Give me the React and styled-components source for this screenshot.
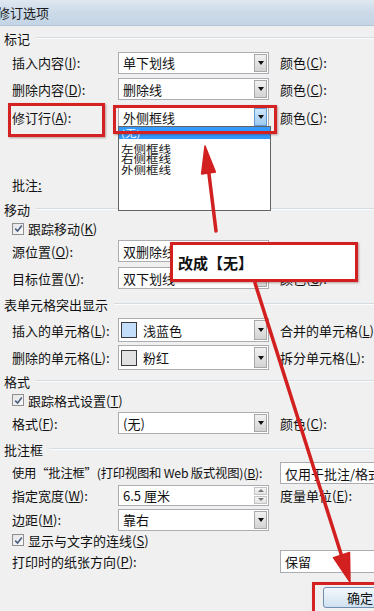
import styled, { createGlobalStyle } from 'styled-components';

const GlobalStyle = createGlobalStyle`
  html, body {
    margin: 0;
    padding: 0;
    background: #f0f0f0;
    overflow: hidden;
  }
  body {
    font-family: "Noto Sans CJK SC", "Liberation Sans", sans-serif;
    font-size: 13px;
    color: #111;
  }
`;

const Dialog = styled.div`
  position: relative;
  width: 374px;
  height: 611px;
  overflow: hidden;
  background: #f0f0f0;
`;

const TitleBar = styled.div`
  height: 26px;
  display: flex;
  align-items: center;
  background: linear-gradient(180deg, #dfe8f1 0%, #cddbe9 45%, #c3d4e5 100%);
  border-bottom: 1px solid #b4c4d4;
  box-sizing: border-box;
`;

const Title = styled.span`
  margin-left: -3px;
  font-size: 13px;
  color: #1a1a1a;
`;

const Body = styled.div`
  padding-left: 4px;
`;

const GroupHeader = styled.div`
  display: flex;
  align-items: center;
  gap: 6px;
  height: ${(p) => p.$h}px;
  font-size: 13px;
  white-space: nowrap;

  &::after {
    content: '';
    flex: 1;
    border-top: 1px solid #d5dde3;
    border-bottom: 1px solid #fbfbfb;
  }
`;

const Row = styled.div`
  display: flex;
  align-items: center;
  height: ${(p) => p.$h}px;
  margin-top: ${(p) => p.$gap || 0}px;
  padding-left: 8px;
  white-space: nowrap;
`;

const Label = styled.div`
  width: ${(p) => p.$w || 106}px;
  flex-shrink: 0;
  font-size: ${(p) => (p.$tight ? 12.3 : 13)}px;
  letter-spacing: ${(p) => (p.$tight ? -0.2 : 0)}px;
  overflow: hidden;
`;

const Combo = styled.div`
  width: ${(p) => p.$w || 151}px;
  height: ${(p) => p.$h || 22}px;
  flex-shrink: 0;
  box-sizing: border-box;
  background: #fff;
  border: 1px solid #abadb3;
  display: flex;
  align-items: center;
`;

const ComboText = styled.div`
  flex: 1;
  padding-left: ${(p) => (p.$afterSwatch ? 6 : 4)}px;
  font-size: 13px;
  overflow: hidden;
`;

const DropBtn = styled.div`
  width: 13px;
  align-self: stretch;
  margin: 1px;
  box-sizing: border-box;
  border: 1px solid ${(p) => (p.$active ? '#5f9ad3' : '#a8a8a8')};
  background: ${(p) =>
    p.$active
      ? 'linear-gradient(180deg, #cfe6fb 0%, #9ccaf2 100%)'
      : 'linear-gradient(180deg, #f1f1f1 0%, #d3d3d3 100%)'};
  display: flex;
  align-items: center;
  justify-content: center;

  &::before {
    content: '';
    border-left: 3.5px solid transparent;
    border-right: 3.5px solid transparent;
    border-top: 4px solid #111;
  }
`;

const Spinner = styled.div`
  width: 13px;
  align-self: stretch;
  margin: 1px;
  display: flex;
  flex-direction: column;
  gap: 1px;
`;

const SpinHalf = styled.div`
  flex: 1;
  border: 1px solid #c4c4c4;
  background: linear-gradient(180deg, #f6f6f6, #e2e2e2);
  display: flex;
  align-items: center;
  justify-content: center;

  &::before {
    content: '';
    border-left: 3px solid transparent;
    border-right: 3px solid transparent;
    ${(p) => (p.$up ? 'border-bottom: 3px solid #777;' : 'border-top: 3px solid #777;')}
  }
`;

const SideLabel = styled.div`
  margin-left: 11px;
  font-size: 13px;
`;

const Swatch = styled.div`
  width: 16px;
  height: 16px;
  margin-left: 2px;
  box-sizing: border-box;
  border: 1px solid #3a3a3a;
  background: ${(p) => p.$color};
  flex-shrink: 0;
`;

const CheckBox = styled.div`
  width: 12px;
  height: 12px;
  box-sizing: border-box;
  border: 1px solid #8f8f8f;
  background: linear-gradient(135deg, #e4e4e4, #fafafa);
  margin-right: 4px;
  display: flex;
  align-items: center;
  justify-content: center;
`;

const ButtonRow = styled.div`
  height: 36px;
  padding-top: 12px;
  padding-left: 319px;
  box-sizing: border-box;
`;

const OkButton = styled.div`
  width: 80px;
  height: 21px;
  box-sizing: border-box;
  border: 1px solid #6f8fb0;
  border-radius: 3px;
  background: linear-gradient(180deg, #f3f8fc 0%, #e2edf7 50%, #cfe0f0 100%);
  display: flex;
  align-items: center;
  justify-content: center;
  font-size: 13px;
  padding-right: 6px;
`;

const DropList = styled.div`
  position: absolute;
  left: 118px;
  top: 126px;
  width: 153px;
  height: 85px;
  box-sizing: border-box;
  background: #fff;
  border: 1px solid #646464;
`;

const ListItem = styled.div`
  height: ${(p) => (p.$first ? 12 : 10.5)}px;
  padding-left: 2px;
  margin-bottom: ${(p) => (p.$first ? 4 : 0)}px;
  background: ${(p) => (p.$selected ? '#3399ff' : 'transparent')};
  color: ${(p) => (p.$selected ? '#fff' : '#111')};
  display: flex;
  align-items: center;
`;

/* the list text in the picture is squeezed vertically */
const ListText = styled.span`
  display: inline-block;
  font-size: ${(p) => (p.$small ? 11.5 : 12.5)}px;
  line-height: 11px;
  transform: scaleY(0.8);
  transform-origin: center;
`;

const RedBox = styled.div`
  position: absolute;
  box-sizing: border-box;
  border: 3px solid #d42222;
  box-shadow: 1px 1px 2px rgba(90, 0, 0, 0.35);
`;

const Callout = styled.div`
  position: absolute;
  left: 170px;
  top: 242px;
  width: 188px;
  height: 40px;
  box-sizing: border-box;
  border: 3px solid #d21f1f;
  background: #fff;
  display: flex;
  align-items: center;
  padding-left: 5px;
  font-size: 15px;
  font-weight: 700;
  color: #111;
  box-shadow: 1px 1px 2px rgba(90, 0, 0, 0.35);
`;

const ArrowLayer = styled.svg`
  position: absolute;
  left: 0;
  top: 0;
  width: 374px;
  height: 611px;
  pointer-events: none;
`;

function Key({ k }) {
  return (
    <>
      (<u>{k}</u>)
    </>
  );
}

function Check() {
  return (
    <CheckBox>
      <svg width="9" height="9" viewBox="0 0 9 9">
        <path d="M1.2 4.6 L3.6 7 L7.8 1.6" fill="none" stroke="#4a5f80" strokeWidth="1.6" />
      </svg>
    </CheckBox>
  );
}

export default function App() {
  return (
    <Dialog>
      <GlobalStyle />
      <TitleBar>
        <Title>修订选项</Title>
      </TitleBar>
      <Body>
        <GroupHeader $h={24}>标记</GroupHeader>
        <Row $h={25}>
          <Label>插入内容<Key k="I" />:</Label>
          <Combo><ComboText>单下划线</ComboText><DropBtn /></Combo>
          <SideLabel>颜色<Key k="C" />:</SideLabel>
        </Row>
        <Row $h={28}>
          <Label>删除内容<Key k="D" />:</Label>
          <Combo><ComboText>删除线</ComboText><DropBtn /></Combo>
          <SideLabel>颜色<Key k="C" />:</SideLabel>
        </Row>
        <Row $h={28}>
          <Label>修订行<Key k="A" />:</Label>
          <Combo><ComboText>外侧框线</ComboText><DropBtn $active /></Combo>
          <SideLabel>颜色<Key k="C" />:</SideLabel>
        </Row>
        <Row $h={28} $gap={39}>
          <Label>批注<u>:</u></Label>
        </Row>

        <GroupHeader $h={22}>移动</GroupHeader>
        <Row $h={17}>
          <Check />跟踪移动<Key k="K" />
        </Row>
        <Row $h={28}>
          <Label>源位置<Key k="O" />:</Label>
          <Combo><ComboText>双删除线</ComboText><DropBtn /></Combo>
          <SideLabel>颜色<Key k="C" />:</SideLabel>
        </Row>
        <Row $h={26}>
          <Label>目标位置<Key k="V" />:</Label>
          <Combo><ComboText>双下划线</ComboText><DropBtn /></Combo>
          <SideLabel>颜色<Key k="C" />:</SideLabel>
        </Row>

        <GroupHeader $h={26}>表单元格突出显示</GroupHeader>
        <Row $h={26}>
          <Label>插入的单元格<Key k="L" />:</Label>
          <Combo $h={24}>
            <Swatch $color="#c2defa" />
            <ComboText $afterSwatch>浅蓝色</ComboText>
            <DropBtn />
          </Combo>
          <SideLabel>合并的单元格<Key k="L" />:</SideLabel>
        </Row>
        <Row $h={29}>
          <Label>删除的单元格<Key k="L" />:</Label>
          <Combo $h={25}>
            <Swatch $color="#e2e2e2" />
            <ComboText $afterSwatch>粉红</ComboText>
            <DropBtn />
          </Combo>
          <SideLabel>拆分单元格<Key k="L" />:</SideLabel>
        </Row>

        <GroupHeader $h={18}>格式</GroupHeader>
        <Row $h={20}>
          <Check />跟踪格式设置<Key k="T" />
        </Row>
        <Row $h={26}>
          <Label>格式<Key k="F" />:</Label>
          <Combo><ComboText>(无)</ComboText><DropBtn /></Combo>
          <SideLabel>颜色<Key k="C" />:</SideLabel>
        </Row>

        <GroupHeader $h={26}>批注框</GroupHeader>
        <Row $h={22}>
          <Label $w={268} $tight>使用“批注框”(打印视图和 Web 版式视图)<Key k="B" />:</Label>
          <Combo $w={120}><ComboText>仅用于批注/格式</ComboText></Combo>
        </Row>
        <Row $h={22}>
          <Label>指定宽度<Key k="W" />:</Label>
          <Combo $h={21}>
            <ComboText>6.5 厘米</ComboText>
            <Spinner><SpinHalf $up /><SpinHalf /></Spinner>
          </Combo>
          <SideLabel>度量单位<Key k="E" />:</SideLabel>
        </Row>
        <Row $h={27}>
          <Label>边距<Key k="M" />:</Label>
          <Combo><ComboText>靠右</ComboText><DropBtn /></Combo>
        </Row>
        <Row $h={14}>
          <Check />显示与文字的连线<Key k="S" />
        </Row>
        <Row $h={28}>
          <Label $w={268}>打印时的纸张方向<Key k="P" />:</Label>
          <Combo $w={120} $h={23}><ComboText>保留</ComboText></Combo>
        </Row>
        <ButtonRow>
          <OkButton>确定</OkButton>
        </ButtonRow>
      </Body>

      <DropList>
        <ListItem $first $selected><ListText $small>(无)</ListText></ListItem>
        <ListItem><ListText>左侧框线</ListText></ListItem>
        <ListItem><ListText>右侧框线</ListText></ListItem>
        <ListItem><ListText>外侧框线</ListText></ListItem>
      </DropList>

      <RedBox style={{ left: 8, top: 103, width: 97, height: 34 }} />
      <RedBox style={{ left: 113, top: 105, width: 164, height: 29 }} />
      <RedBox style={{ left: 312, top: 582, width: 70, height: 40 }} />

      <Callout>改成【无】</Callout>

      <ArrowLayer viewBox="0 0 374 611">
        <g fill="#d21f1f" stroke="#d21f1f" strokeLinecap="round" strokeLinejoin="round">
          <line x1="216" y1="231" x2="208.5" y2="170" strokeWidth="3.5" />
          <polygon points="205,146 215.4,172 201.6,174" strokeWidth="1.5" />
          <line x1="255" y1="283" x2="342" y2="557" strokeWidth="3.5" />
          <polygon points="350,582 349.5,552.5 333.5,557.7" strokeWidth="1.5" />
        </g>
      </ArrowLayer>
    </Dialog>
  );
}
